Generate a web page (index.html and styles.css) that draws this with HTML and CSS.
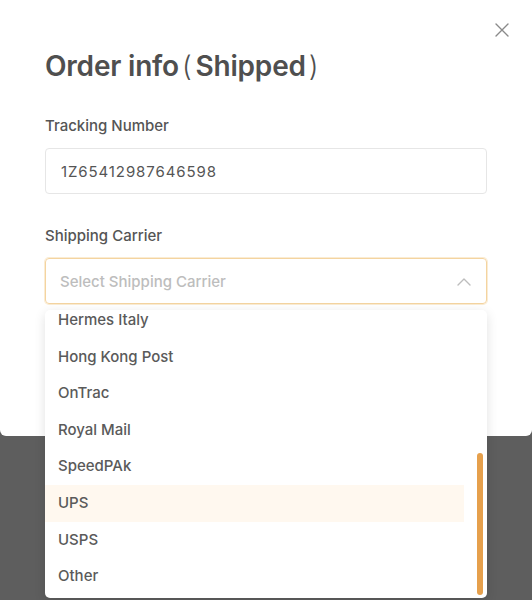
FILE: index.html
```html
<!DOCTYPE html>
<html lang="en">
<head>
    <meta charset="UTF-8">
    <meta name="viewport" content="width=device-width, initial-scale=1.0">
    <title>Order info</title>
    <link rel="stylesheet" href="styles.css">
</head>
<body>
    <div class="backdrop">
        <div class="modal">
            <button class="close-btn" aria-label="Close">
                <svg width="14" height="14" viewBox="0 0 14 14">
                    <path d="M1 1 L13 13 M13 1 L1 13" stroke="#8a8a8a" stroke-width="1.4" stroke-linecap="round" fill="none"/>
                </svg>
            </button>

            <h1 class="title">Order info<span class="paren">(</span>Shipped<span class="paren">)</span></h1>

            <div class="form-group">
                <label class="form-label">Tracking Number</label>
                <div class="input">1Z65412987646598</div>
            </div>

            <div class="form-group">
                <label class="form-label">Shipping Carrier</label>
                <div class="select-wrap">
                    <div class="select">
                        <span class="placeholder">Select Shipping Carrier</span>
                        <svg class="chevron" width="14" height="9" viewBox="0 0 14 9">
                            <path d="M1 8 L7 2 L13 8" stroke="#bdbdbd" stroke-width="1.4" fill="none" stroke-linecap="round" stroke-linejoin="round"/>
                        </svg>
                    </div>

                    <div class="dropdown">
                        <ul class="options">
                            <li>Hermes Italy</li>
                            <li>Hong Kong Post</li>
                            <li>OnTrac</li>
                            <li>Royal Mail</li>
                            <li>SpeedPAk</li>
                            <li class="hover">UPS</li>
                            <li>USPS</li>
                            <li>Other</li>
                        </ul>
                        <div class="scroll-track">
                            <div class="scroll-thumb"></div>
                        </div>
                    </div>
                </div>
            </div>
        </div>
    </div>
</body>
</html>
```

FILE: styles.css
```css
body {
    margin: 0;
    background-color: #5e5e5e;
    font-family: Inter, "Noto Sans", sans-serif;
    color: #555;
}

.backdrop {
    height: 600px;
    overflow: hidden;
    background-color: #5e5e5e;
}

.modal {
    position: relative;
    height: 436px;
    box-sizing: border-box;
    padding: 48px 45px 0;
    background-color: #fff;
    border-radius: 0 0 6px 6px;
}

.close-btn {
    position: absolute;
    top: 23px;
    right: 23px;
    width: 14px;
    height: 14px;
    padding: 0;
    border: none;
    background: none;
    cursor: pointer;
}

.close-btn svg {
    display: block;
}

.title {
    margin: 0;
    font-size: 28px;
    line-height: 36px;
    font-weight: 600;
    letter-spacing: -0.2px;
    color: #4f4f4f;
}

.paren {
    font-weight: 300;
    margin: 0 4px 0 3px;
}

.form-group {
    margin-top: 32px;
}

.form-label {
    display: block;
    margin-bottom: 12px;
    font-size: 15px;
    line-height: 20px;
    font-weight: 500;
    color: #555;
}

.input,
.select {
    height: 46px;
    box-sizing: border-box;
    display: flex;
    align-items: center;
    padding: 0 15px;
    border: 1px solid #e6e6e6;
    border-radius: 4px;
    font-size: 15px;
}

.input {
    letter-spacing: 0.9px;
    color: #555;
}

.select-wrap {
    position: relative;
}

.select {
    justify-content: space-between;
    border-color: #f4d4a0;
    box-shadow: 0 0 0 1px rgba(244, 212, 160, 0.45);
    padding-left: 14px;
    padding-right: 15px;
}

.placeholder {
    color: #bdbdbd;
    font-weight: 500;
}

.chevron {
    display: block;
}

/* dropdown menu hangs over the backdrop */
.dropdown {
    position: absolute;
    z-index: 10;
    top: calc(100% + 6px);
    left: 0;
    right: 0;
    height: 288px;
    display: flex;
    overflow: hidden;
    background-color: #fff;
    border-radius: 5px;
    box-shadow: 0 3px 12px rgba(0, 0, 0, 0.12);
}

.options {
    flex: 1;
    list-style: none;
    margin: -8px 0 0;
    padding: 0;
}

.options li {
    height: 36.6px;
    line-height: 36.6px;
    padding-left: 13px;
    font-size: 15px;
    font-weight: 500;
    color: #5a5a5a;
}

.options li.hover {
    background-color: #fff8ef;
}

.scroll-track {
    width: 23px;
    display: flex;
    flex-direction: column;
    align-items: flex-end;
    padding: 143px 4px 0 0;
    box-sizing: border-box;
}

.scroll-thumb {
    width: 6px;
    height: 142px;
    border-radius: 3px;
    background-color: #e6a04c;
}
```
